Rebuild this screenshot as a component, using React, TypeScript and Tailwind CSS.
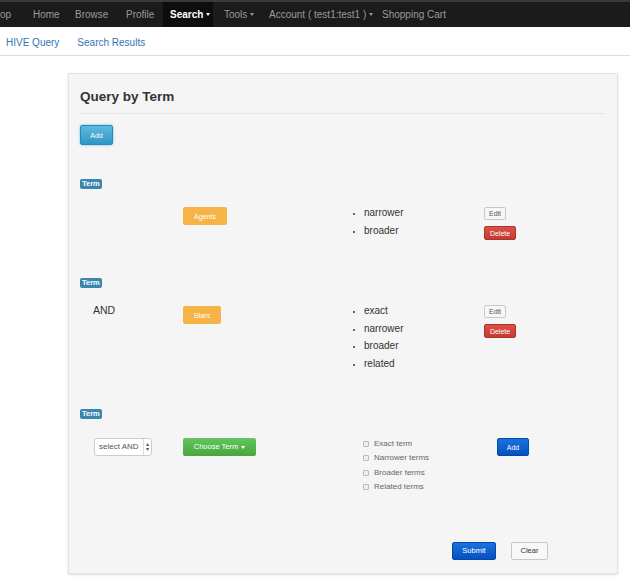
import React from 'react';

const font = { fontFamily: '"Liberation Sans", Arial, sans-serif' };

function Caret({ className = '' }: { className?: string }) {
  return <span className={`inline-block ml-[3px] border-t-[3px] border-x-[2px] border-x-transparent ${className}`} />;
}

function TermLabel({ mt }: { mt: string }) {
  return (
    <div className={`flex h-[10px] ${mt}`}>
      <span className="block bg-[#3a87ad] text-white text-[7.5px] font-bold leading-[10px] px-[2px] rounded-[2px]">
        Term
      </span>
    </div>
  );
}

function Bullets({ items }: { items: string[] }) {
  return (
    <ul className="list-disc pl-[9px] text-[10px] leading-[17.5px] text-[#333] marker:text-[8px]">
      {items.map(i => (
        <li key={i}>{i}</li>
      ))}
    </ul>
  );
}

function EditDelete() {
  return (
    <div className="flex flex-col items-start gap-[6px] pt-[3px]">
      <button className="block h-[13px] w-[22px] text-[7px] leading-none text-[#555] bg-[#f7f7f7] border border-[#c8c8c8] rounded-[2px]">Edit</button>
      <button className="block h-[14px] w-[32px] text-[7px] leading-none text-white bg-gradient-to-b from-[#dd5147] to-[#c13a31] border border-[#b33027] rounded-[2px]">Delete</button>
    </div>
  );
}

export default function App() {
  return (
    <div className="min-h-screen bg-white" style={font}>
      <div className="h-[27px] bg-[#1b1b1b] border-t-2 border-[#3a3a3a] flex items-stretch text-[10px] text-[#9a9a9a]">
        <span className="flex items-center w-[33px]">op</span>
        <span className="flex items-center w-[42px]">Home</span>
        <span className="flex items-center w-[51px]">Browse</span>
        <span className="flex items-center w-[37px]">Profile</span>
        <span className="flex items-center bg-[#0d0d0d] text-white font-bold pl-[7px] w-[50px]">
          Search<Caret className="border-t-white" />
        </span>
        <span className="flex items-center pl-[11px] w-[56px]">Tools<Caret className="border-t-[#999]" /></span>
        <span className="flex items-center w-[113px]">Account ( test1:test1 )<Caret className="border-t-[#999]" /></span>
        <span className="flex items-center">Shopping Cart</span>
      </div>

      <div className="h-[29px] border-b border-[#dcdcdc] flex items-center pt-[3px] text-[10px] text-[#2f74b5] pl-[6px] gap-[18px]">
        <span>HIVE Query</span>
        <span>Search Results</span>
      </div>

      <div className="ml-[68px] mt-[17px] w-[550px] h-[501px] bg-[#f5f5f5] border border-[#e3e3e3] shadow-sm px-[11px]">
        <div className="h-[40px] pt-[13px] border-b border-[#e6e6e6] mr-[1px]">
          <h1 className="text-[13.5px] font-bold text-[#333] leading-[20px]">Query by Term</h1>
        </div>

        <button className="block mt-[11px] h-[20px] w-[33px] text-[7px] leading-none text-white bg-gradient-to-b from-[#5bbbe0] to-[#2f96c4] border border-[#2a88b4] rounded-[2px] shadow-[0_0_3px_#7cc4e8]">
          Add
        </button>

        <TermLabel mt="mt-[34px]" />

        <div className="mt-[15px] h-[36px] flex items-start">
          <div className="w-[103px]" />
          <div className="w-[172px] pt-[3px]">
            <button className="block h-[18px] w-[44px] text-[7px] leading-none text-white bg-[#f6b446] rounded-[2px]">Agents</button>
          </div>
          <div className="w-[129px]"><Bullets items={['narrower', 'broader']} /></div>
          <EditDelete />
        </div>

        <TermLabel mt="mt-[38px]" />

        <div className="mt-[14px] h-[70px] flex items-start">
          <div className="w-[103px] pl-[13px] text-[10.5px] leading-[17.5px] text-[#333]">AND</div>
          <div className="w-[172px] pt-[4px]">
            <button className="block h-[18px] w-[38px] text-[7px] leading-none text-white bg-[#f6b446] rounded-[2px]">Stars</button>
          </div>
          <div className="w-[129px]"><Bullets items={['exact', 'narrower', 'broader', 'related']} /></div>
          <EditDelete />
        </div>

        <TermLabel mt="mt-[37px]" />

        <div className="mt-[18px] h-[58px] flex items-start">
          <div className="w-[103px] pl-[14px] pt-[1px]">
            <div className="h-[18px] w-[58px] flex items-center bg-white border border-[#ccc] rounded-[3px] text-[8px] text-[#555]">
              <span className="pl-[4px] flex-1 overflow-hidden whitespace-nowrap">select AND</span>
              <span className="border-l border-[#ddd] h-full flex flex-col items-center justify-center px-[2px] text-[6px] leading-[5px]">
                <span>▴</span><span>▾</span>
              </span>
            </div>
          </div>
          <div className="w-[180px] pt-[1px]">
            <button className="h-[18px] w-[73px] text-[7.5px] leading-none text-white bg-gradient-to-b from-[#62c462] to-[#4aa63a] rounded-[2px] flex items-center justify-center">
              Choose Term<Caret className="border-t-white" />
            </button>
          </div>
          <div className="w-[134px] text-[8px] text-[#666] leading-[14.3px]">
            {['Exact term', 'Narrower terms', 'Broader terms', 'Related terms'].map(t => (
              <div key={t} className="flex items-center gap-[5px]">
                <span className="block w-[6px] h-[6px] border border-[#bbb] bg-[#eee] rounded-[1px]" />
                <span>{t}</span>
              </div>
            ))}
          </div>
          <div className="pt-[1px]">
            <button className="block h-[18px] w-[32px] text-[7px] leading-none text-white bg-gradient-to-b from-[#1a72de] to-[#0650bf] border border-[#0648a8] rounded-[2px]">Add</button>
          </div>
        </div>

        <div className="mt-[47px] flex justify-end gap-[15px] pr-[58px]">
          <button className="block h-[18px] w-[44px] text-[7.5px] leading-none text-white bg-gradient-to-b from-[#1a72de] to-[#0650bf] border border-[#0648a8] rounded-[2px]">Submit</button>
          <button className="block h-[18px] w-[37px] text-[7.5px] leading-none text-[#333] bg-[#f8f8f8] border border-[#c8c8c8] rounded-[2px]">Clear</button>
        </div>
      </div>
    </div>
  );
}
